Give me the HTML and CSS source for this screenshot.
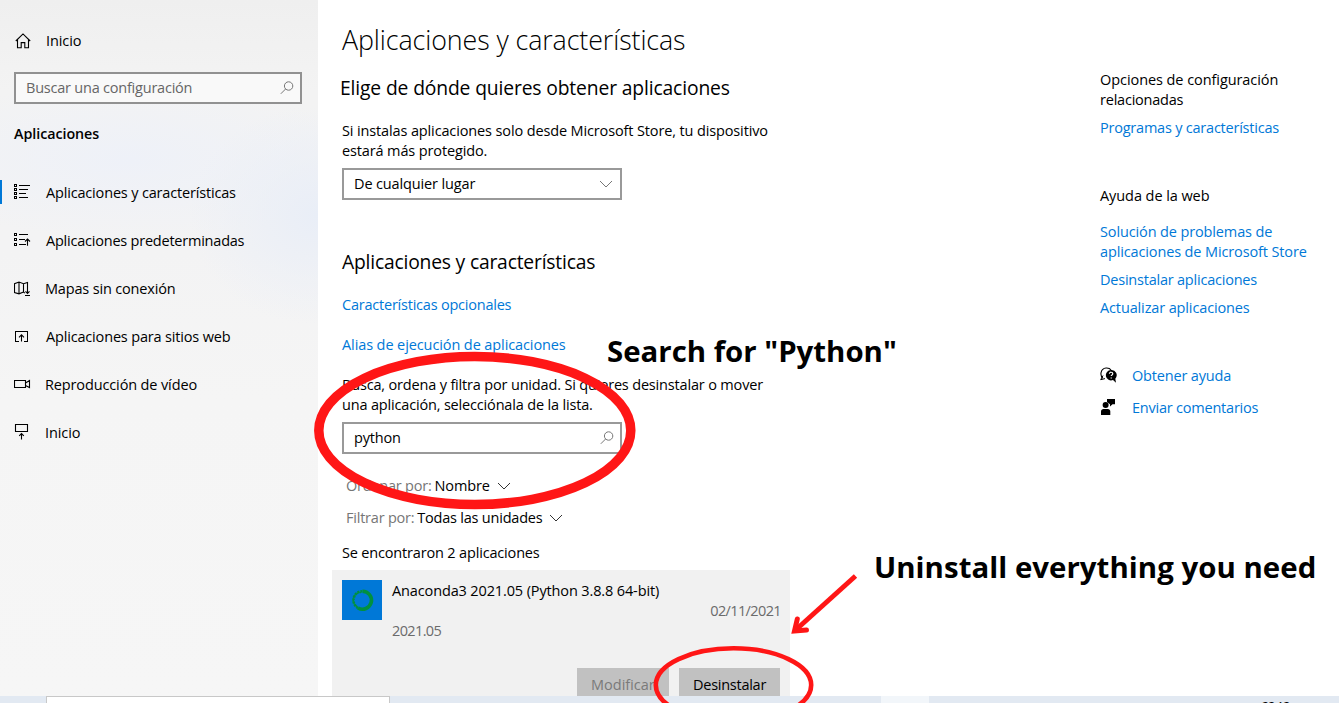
FILE: index.html
```html
<!DOCTYPE html>
<html lang="es">
<head>
<meta charset="utf-8">
<title>Aplicaciones y características</title>
<link rel="stylesheet" href="styles.css">
</head>
<body>
<div class="screen">
  <div class="settings">
    <aside class="sidebar">
      <a class="nav-item home">
        <svg class="icon" width="18" height="18" viewBox="0 0 18 18"><path d="M1.8 9 9 1.9 16.2 9M3.5 7.5v8.3h3.7v-5.2h3.6v5.2h3.7V7.5"/></svg>
        <span class="w-loose">Inicio</span>
      </a>
      <div class="field side-search">
        <span class="tight">Buscar una configuración</span>
        <svg class="icon grey" width="14" height="14" viewBox="0 0 14 14"><circle cx="8.6" cy="5" r="4.2"/><path d="M5.6 8 .8 12.8"/></svg>
      </div>
      <h2 class="section">Aplicaciones</h2>
      <nav class="nav">
        <a class="nav-item active">
          <svg class="icon crisp" width="18" height="18" viewBox="0 0 18 18"><path d="M.5 1.5h2v2h-2zM.5 5.5h2v2h-2zM.5 9.5h2v2h-2zM.5 13.5h2v2h-2zM5 2.5h11M5 6.5h9M5 10.5h7M5 14.5h9"/></svg>
          <span>Aplicaciones y características</span>
        </a>
        <a class="nav-item">
          <svg class="icon crisp" width="18" height="18" viewBox="0 -1 18 18"><path d="M.5 1.5h2v2h-2zM.5 6.5h2v2h-2zM.5 11.5h2v2h-2zM5 2.5h9M5 7.5h6M5 12.5h7"/><path class="smooth" d="M13.5 13.8V7M11 9.5 13.5 7 16 9.5"/></svg>
          <span class="tight">Aplicaciones predeterminadas</span>
        </a>
        <a class="nav-item m1">
          <svg class="icon" width="18" height="18" viewBox="0 -1.500 18 18"><path d="M9.500 11.600 5 13.300.500 12V3.200L5 1.600l4.500 1.600L13.500 2v4.500M5 1.600v11.700M9.500 3.200v8.400M9.500 11.600l1.500 1M13.500 5v8M11.500 10.900l2 2 2-2M11 15h5"/></svg>
          <span>Mapas sin conexión</span>
        </a>
        <a class="nav-item">
          <svg class="icon crisp" width="18" height="18" viewBox="0 -2 18 18"><path d="M5 12.500H1.500v-10h12v10H10"/><path class="smooth" d="M7.500 12.500V6M5 8.300 7.500 5.800 10 8.300"/></svg>
          <span>Aplicaciones para sitios web</span>
        </a>
        <a class="nav-item m1">
          <svg class="icon" width="18" height="18" viewBox="0 -1 18 18"><path d="M.500 4.500h11v7H.500zM11.500 7l4-2.500v7L11.500 9.500"/></svg>
          <span class="loose">Reproducción de vídeo</span>
        </a>
        <a class="nav-item m1">
          <svg class="icon" width="18" height="18" viewBox="0 -1 18 18"><path d="M1.500.500h12v7h-12zM7.500 15.500v-6M5.200 11.900 7.500 9.600 9.800 11.900"/></svg>
          <span class="w-loose">Inicio</span>
        </a>
      </nav>
    </aside>

    <main class="content">
      <h1>Aplicaciones y características</h1>
      <h2 class="source-title">Elige de dónde quieres obtener aplicaciones</h2>
      <p class="loose">Si instalas aplicaciones solo desde Microsoft Store, tu dispositivo<br>estará más protegido.</p>
      <div class="field select">
        <span class="loose">De cualquier lugar</span>
        <svg class="icon grey" width="14" height="8" viewBox="0 0 14 8"><path d="M1 1l6 6 6-6"/></svg>
      </div>
      <h2 class="apps-title">Aplicaciones y características</h2>
      <a class="link optional tight">Características opcionales</a>
      <a class="link alias loose">Alias de ejecución de aplicaciones</a>
      <p>Busca, ordena y filtra por unidad. Si quieres desinstalar o mover<br>una aplicación, selecciónala de la lista.</p>
      <div class="field app-search">
        <span>python</span>
        <svg class="icon grey" width="14" height="14" viewBox="0 0 14 14"><circle cx="8.600" cy="5" r="4.200"/><path d="M5.600 8 .800 12.800"/></svg>
      </div>
      <div class="filter sort"><span class="tight muted">Ordenar por:</span><span class="loose">Nombre</span><svg class="icon" width="14" height="8" viewBox="0 0 14 8"><path d="M1 1l6 6 6-6"/></svg></div>
      <div class="filter"><span class="tight muted">Filtrar por:</span><span class="tight">Todas las unidades</span><svg class="icon" width="14" height="8" viewBox="0 0 14 8"><path d="M1 1l6 6 6-6"/></svg></div>
      <p class="found">Se encontraron 2 aplicaciones</p>
      <section class="app-card">
        <div class="app-row">
          <svg class="app-logo" width="40" height="40" viewBox="0 0 40 40"><path fill="#0078d7" d="M0 0h40v40H0z"/><path class="ring" d="M20.500 11.200a9 9 0 1 1-4.500 16.800"/><path class="ring dots" d="M16 28A9 9 0 0 1 20.500 11.200"/><path class="ring dots thin" d="M15 26.500A7.500 7.500 0 0 1 20.500 12.700"/></svg>
          <div class="app-info">
            <span class="loose">Anaconda3 2021.05 (Python 3.8.8 64-bit)</span>
            <span class="date digits">02/11/2021</span>
            <span class="version digits">2021.05</span>
          </div>
        </div>
        <div class="actions">
          <button class="btn modify" disabled>Modificar</button>
          <button class="btn remove">Desinstalar</button>
        </div>
      </section>
    </main>

    <aside class="related">
      <p class="related-title">Opciones de configuración<br><span class="tight">relacionadas</span></p>
      <a class="link tight">Programas y características</a>
      <p class="web-help">Ayuda de la web</p>
      <a class="link store loose">Solución de problemas de<br>aplicaciones de Microsoft Store</a>
      <a class="link tight">Desinstalar aplicaciones</a>
      <a class="link loose">Actualizar aplicaciones</a>
      <div class="support">
        <svg width="18" height="18" viewBox="0 0 18 18"><path d="M3 11.400C-.500 8.500.500 1.500 6 1c2.600-.200 4.200.700 5 2" fill="none" stroke="#000" stroke-width="1.100"/><path d="M3 8.500.700 12.700 5 11.600" fill="none" stroke="#000"/><path d="M11 3a5.200 5.200 0 1 0 2 10l3 2.800-.700-4.100A5.200 5.200 0 0 0 11 3z"/><path d="M9.400 6.800c0-2.200 3.400-2 3.400 0 0 1.200-1.600 1.100-1.600 2.300M11.200 10.400v1.200" fill="none" stroke="#fff" stroke-width="1.200"/></svg>
        <a class="link">Obtener ayuda</a>
      </div>
      <div class="support">
        <svg width="18" height="18" viewBox="0 0 18 18"><path d="M7 0h8v5.200h-2.500L10 7.500V5.200L7 3z"/><circle cx="5.600" cy="6" r="3"/><path d="M1 16v-3.500c0-1.600 1-2.500 2.500-2.500h4.300c1.500 0 2.500 1 2.500 2.500V16z"/></svg>
        <a class="link tight">Enviar comentarios</a>
      </div>
    </aside>
  </div>
  <div class="taskbar">
    <div class="task-search"></div>
    <div class="task-active"></div>
    <div class="clock">22:12</div>
  </div>

  <svg class="marks" width="1339" height="703" viewBox="0 0 1339 703">
    <ellipse cx="474.800" cy="430.500" rx="156" ry="74" stroke-width="9.500"/>
    <ellipse cx="733.500" cy="685" rx="77.700" ry="36.700" stroke-width="4.600"/>
    <path d="M855.500 576 794.500 631" stroke-width="5"/>
    <path d="M797.300 619 794.500 631 806.500 630" stroke-width="5" stroke-linecap="round" stroke-linejoin="miter"/>
  </svg>
  <div class="note note-search">Search for "Python"</div>
  <div class="note note-remove">Uninstall everything you need</div>
</div>
</body>
</html>
```
FILE: styles.css
```css
* { box-sizing: border-box; }
body {
  margin: 0;
  background: #fff;
  color: #000;
  font: 14.5px/20px "Open Sans", "Noto Sans", sans-serif;
  letter-spacing: -0.17px;
}
h1, h2, p { margin: 0; font-weight: 400; }
span, a { white-space: nowrap; }
.tight { letter-spacing: -0.22px; }
.loose { letter-spacing: -0.13px; }
.w-loose { letter-spacing: -0.1px; }
.digits { letter-spacing: -0.62px; }

.screen {
  position: relative;
  display: flex;
  flex-direction: column;
  width: 1339px;
  height: 703px;
  overflow: hidden;
}
.settings { display: flex; height: 696px; overflow: hidden; }

.icon { flex: none; fill: none; stroke: #000; stroke-width: 1.1; }
.icon.grey { stroke: #777; stroke-width: 1; }
.icon.crisp { shape-rendering: crispEdges; stroke-width: 1; }
.smooth { shape-rendering: auto; stroke-width: 1.1; }

/* left navigation */
.sidebar {
  flex: none;
  width: 318px;
  height: 696px;
  padding-top: 17px;
  background:
    radial-gradient(ellipse 130px 110px at 318px 215px, #e9eef7 0%, transparent 100%),
    radial-gradient(ellipse 230px 80px at 130px 160px, #eef1f8 0%, transparent 100%),
    linear-gradient(#efefef, #f3f3f3 90px, #f3f3f4 250px, #f5f5f5 400px, #f6f6f6);
}
.nav-item {
  display: flex;
  align-items: center;
  gap: 14px;
  height: 48px;
  padding-left: 14px;
}
.m1 { gap: 13px; }
.side-search { width: 288px; margin: 7px 0 0 14px; color: #666; }
.section {
  margin: 20px 0 0 14px;
  font-size: 14.3px;
  font-weight: 600;
  line-height: 20px;
  letter-spacing: -0.05px;
}
.nav { margin-top: 24px; }
.nav span { padding-top: 2px; }
.active { background: linear-gradient(#0078d7, #0078d7) 0 12px / 2px 24px no-repeat; }

.field {
  display: flex;
  align-items: center;
  justify-content: space-between;
  height: 32px;
  padding: 0 6px 0 10px;
  border: 2px solid #999;
  background: #fff;
}
.side-search { border-color: #919191; background: #f9f9f9; }

/* main column */
.content { flex: none; width: 782px; padding: 21px 0 0 24px; }
h1 {
  font-size: 26.8px;
  font-weight: 350;
  line-height: 38px;
  letter-spacing: -0.09px;
}
h2 { font-size: 19.3px; line-height: 26px; letter-spacing: -0.2px; }
.source-title { margin: 16px 0 20px -2px; letter-spacing: -0.14px; }
.select { width: 280px; margin-top: 7px; padding-right: 7px; }
.apps-title { margin: 49px 0 20px; }
.link { display: block; color: #0078d7; }
.alias { margin: 20px 0; letter-spacing: -0.1px; }
.app-search { width: 280px; margin-top: 7px; }
.filter { display: flex; align-items: center; margin: 12px 0 0 4px; }
.sort { margin-top: 22px; }
.muted { margin-right: 3px; color: #767676; }
.filter .icon { margin-left: 7px; stroke: #333; stroke-width: 1; }
.found { margin-top: 15px; }

.app-card {
  width: 458px;
  height: 140px;
  margin: 7px 0 0 -10px;
  padding: 10px;
  background: #f1f1f1;
}
.app-row { display: flex; gap: 10px; height: 88px; }
.app-info { display: flex; flex: 1; flex-direction: column; padding-top: 1px; }
.date { align-self: flex-end; margin-right: -1px; color: #6b6b6b; }
.version { color: #6b6b6b; }
.ring { fill: none; stroke: #00913e; stroke-width: 3.6; }
.dots { stroke-width: 2.6; stroke-dasharray: 2 1; }
.thin { stroke-width: 1.5; stroke-dasharray: 1.5 1.5; }
.actions { display: flex; justify-content: flex-end; gap: 10px; }
.btn {
  height: 32px;
  padding: 2px 0 0 14px;
  border: 0;
  background: #c1c1c1;
  color: #000;
  font: inherit;
  letter-spacing: -0.26px;
  text-align: left;
}
.modify { width: 92px; color: #7a7a7a; letter-spacing: 0; }
.remove { width: 101px; }

/* right column */
.related { padding-top: 70px; }
.related-title, .web-help { letter-spacing: -0.07px; }
.related > .link { margin-top: 8px; }
.web-help { margin-top: 48px; }
.related > .store { margin-top: 16px; }
.support { display: flex; align-items: center; gap: 14px; height: 32px; }
.support:nth-last-child(2) { margin-top: 42px; }

.taskbar { display: flex; height: 7px; overflow: hidden; background: #e2e9f2; }
.task-search {
  width: 344px;
  margin-left: 46px;
  border: 1px solid #c8c8c8;
  border-bottom: 0;
  background: #fff;
}
.task-active { width: 48px; margin-left: 491px; background: #f2f6fa; }
.clock { margin: 5px 0 0 333px; font-size: 12px; line-height: 12px; letter-spacing: -0.6px; }

/* annotations over the window */
.marks { position: absolute; inset: 0; fill: none; stroke: #ff1616; }
.note {
  position: absolute;
  font-size: 29.4px;
  font-weight: 700;
  line-height: 40px;
  letter-spacing: 0;
  white-space: nowrap;
}
.note-search { left: 607px; top: 331px; }
.note-remove { left: 874px; top: 547px; letter-spacing: 0.04px; }
```
